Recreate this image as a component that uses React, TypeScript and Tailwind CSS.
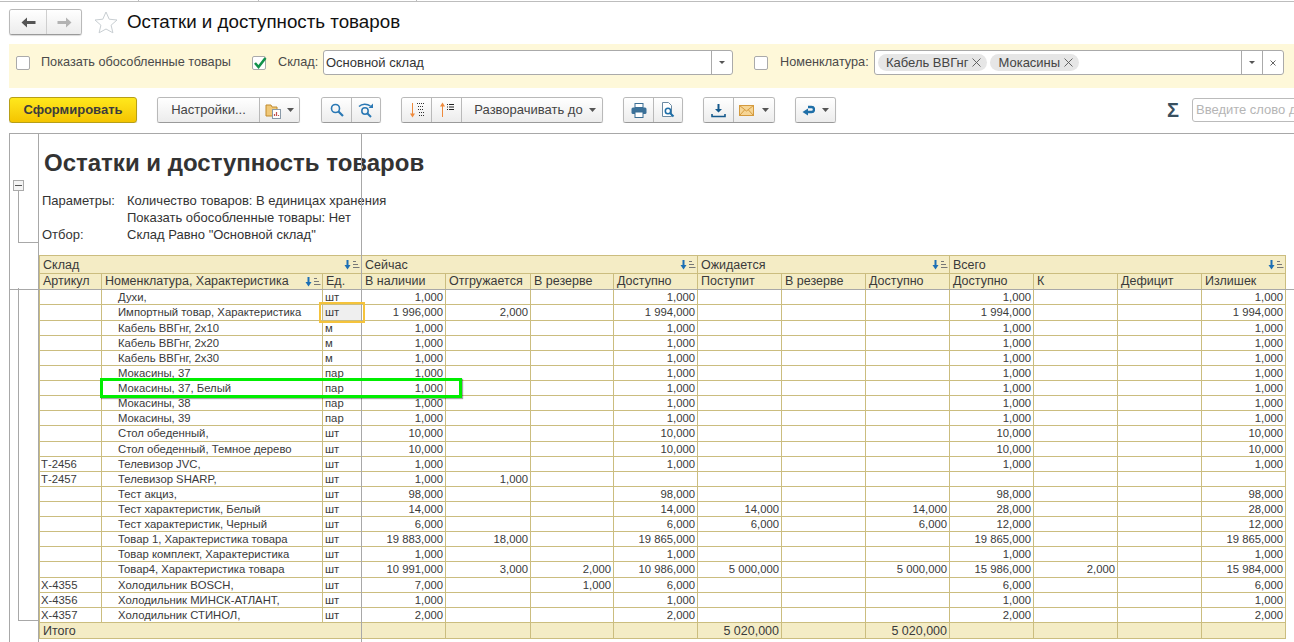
import React from 'react';

type Row = {
  art?: string;
  name: string;
  unit: string;
  vals: string[];
  tall?: boolean;
  selected?: boolean;
};

// колонки: В наличии, Отгружается, В резерве, Доступно, Поступит, В резерве, Доступно, Доступно, К, Дефицит, Излишек
const simple = (v: string) => [v, '', '', v, '', '', '', v, '', '', v];

const rows: Row[] = [
  { name: 'Духи,', unit: 'шт', vals: simple('1,000') },
  { name: 'Импортный товар, Характеристика', unit: 'шт', tall: true, selected: true, vals: ['1 996,000', '2,000', '', '1 994,000', '', '', '', '1 994,000', '', '', '1 994,000'] },
  { name: 'Кабель ВВГнг, 2х10', unit: 'м', vals: simple('1,000') },
  { name: 'Кабель ВВГнг, 2х20', unit: 'м', vals: simple('1,000') },
  { name: 'Кабель ВВГнг, 2х30', unit: 'м', vals: simple('1,000') },
  { name: 'Мокасины, 37', unit: 'пар', vals: simple('1,000') },
  { name: 'Мокасины, 37, Белый', unit: 'пар', vals: simple('1,000') },
  { name: 'Мокасины, 38', unit: 'пар', vals: simple('1,000') },
  { name: 'Мокасины, 39', unit: 'пар', vals: simple('1,000') },
  { name: 'Стол обеденный,', unit: 'шт', tall: true, vals: simple('10,000') },
  { name: 'Стол обеденный, Темное дерево', unit: 'шт', vals: simple('10,000') },
  { art: 'Т-2456', name: 'Телевизор JVC,', unit: 'шт', vals: simple('1,000') },
  { art: 'Т-2457', name: 'Телевизор SHARP,', unit: 'шт', vals: ['1,000', '1,000', '', '', '', '', '', '', '', '', ''] },
  { name: 'Тест акциз,', unit: 'шт', vals: simple('98,000') },
  { name: 'Тест характеристик, Белый', unit: 'шт', vals: ['14,000', '', '', '14,000', '14,000', '', '14,000', '28,000', '', '', '28,000'] },
  { name: 'Тест характеристик, Черный', unit: 'шт', vals: ['6,000', '', '', '6,000', '6,000', '', '6,000', '12,000', '', '', '12,000'] },
  { name: 'Товар 1, Характеристика товара', unit: 'шт', vals: ['19 883,000', '18,000', '', '19 865,000', '', '', '', '19 865,000', '', '', '19 865,000'] },
  { name: 'Товар комплект, Характеристика', unit: 'шт', vals: simple('1,000') },
  { name: 'Товар4, Характеристика товара', unit: 'шт', tall: true, vals: ['10 991,000', '3,000', '2,000', '10 986,000', '5 000,000', '', '5 000,000', '15 986,000', '2,000', '', '15 984,000'] },
  { art: 'Х-4355', name: 'Холодильник BOSCH,', unit: 'шт', vals: ['7,000', '', '1,000', '6,000', '', '', '', '6,000', '', '', '6,000'] },
  { art: 'Х-4356', name: 'Холодильник МИНСК-АТЛАНТ,', unit: 'шт', vals: simple('1,000') },
  { art: 'Х-4357', name: 'Холодильник СТИНОЛ,', unit: 'шт', vals: simple('2,000') },
];

const columnWidths = ['w-[62px]', 'w-[221px]', 'w-[39px]', 'w-[84px]', 'w-[85px]', 'w-[83px]', 'w-[84px]', 'w-[84px]', 'w-[84px]', 'w-[84px]', 'w-[84px]', 'w-[84px]', 'w-[84px]', 'w-[84px]'];

const btnClass = 'flex items-center justify-center h-full bg-gradient-to-b from-white to-[#ececec]';
const groupClass = 'flex shrink-0 h-[26px] rounded-[3px] border border-[#b9b9b9] border-b-[#9a9a9a] shadow-[0_1px_1px_rgba(0,0,0,0.15)] overflow-hidden text-[#444]';

const Caret = () => (
  <svg width="7" height="4" viewBox="0 0 7 4" className="shrink-0"><path d="M0 0h7L3.5 4z" fill="#555" /></svg>
);

const SmallCaret = () => (
  <svg width="6" height="3" viewBox="0 0 6 3" className="shrink-0"><path d="M0 0h6L3 3z" fill="#555" /></svg>
);

const Checkbox = ({ checked }: { checked?: boolean }) => (
  <span className="relative block w-[14px] h-[14px] shrink-0 rounded-[2px] border border-[#aaa] bg-white">
    {checked && (
      <svg width="15" height="14" viewBox="0 0 15 14" className="absolute left-0 -top-[1px]">
        <path d="M2 7l3.5 4L12.5 2" fill="none" stroke="#12924a" strokeWidth="2.6" />
      </svg>
    )}
  </span>
);

const SortIcon = () => (
  <svg width="16" height="10" viewBox="0 0 16 10" className="shrink-0 -mr-[2px]">
    <path d="M3.5 0v6" stroke="#1c6fb5" strokeWidth="2" />
    <path d="M0.5 5h6L3.5 9.5z" fill="#1c6fb5" />
    <path d="M9 1.5h3M9 4.5h5M9 7.5h6.5" stroke="#777" strokeWidth="1" />
  </svg>
);

const Chip = ({ label }: { label: string }) => (
  <span className="flex items-center h-[17px] rounded-full bg-[#e6e6e6] pl-[8px] pr-[6px] gap-[4px] text-[#444] text-[13px]">
    {label}
    <svg width="9" height="9" viewBox="0 0 9 9"><path d="M0.5 0.5l8 8M8.5 0.5l-8 8" stroke="#555" strokeWidth="0.9" /></svg>
  </span>
);

function FilterBar() {
  return (
    <div className="flex items-center h-[44px] pb-[7px] ml-[9px] mt-[2px] bg-[#fef8d9] text-[12.7px] text-[#4a4a4a]">
      <span className="ml-[7px]"><Checkbox /></span>
      <span className="ml-[11px] w-[211px]">Показать обособленные товары</span>
      <Checkbox checked />
      <span className="ml-[12px] w-[45px]">Склад:</span>
      <div className="flex items-center h-[25px] w-[410px] rounded-[3px] border border-[#aaa] bg-white text-[#333] text-[13px]">
        <span className="flex-1 pl-[2px]">Основной склад</span>
        <span className="flex items-center justify-center w-[21px] h-full border-l border-[#aaa]"><SmallCaret /></span>
      </div>
      <span className="ml-[21px]"><Checkbox /></span>
      <span className="ml-[12px] w-[94px]">Номенклатура:</span>
      <div className="flex items-center h-[25px] w-[410px] rounded-[3px] border border-[#aaa] bg-white">
        <div className="flex flex-1 items-center gap-[3px] pl-[3px]">
          <Chip label="Кабель ВВГнг" />
          <Chip label="Мокасины" />
        </div>
        <span className="flex items-center justify-center w-[21px] h-full border-l border-[#aaa]"><SmallCaret /></span>
        <span className="flex items-center justify-center w-[21px] h-full border-l border-[#aaa]">
          <svg width="6" height="6" viewBox="0 0 6 6"><path d="M0.5 0.5l5 5M5.5 0.5l-5 5" stroke="#666" strokeWidth="1" /></svg>
        </span>
      </div>
    </div>
  );
}

function Toolbar() {
  return (
    <div className="flex items-center h-[26px] mt-[9px] ml-[9px] text-[13px] overflow-hidden">
      <button className="shrink-0 w-[128px] h-[26px] rounded-[3px] border border-[#b79f17] bg-gradient-to-b from-[#ffe81c] to-[#f4c400] font-bold text-[#3c3c3c] shadow-[0_1px_1px_rgba(0,0,0,0.2)]">
        Сформировать
      </button>

      <div className={`${groupClass} ml-[20px] w-[143px]`}>
        <span className={`${btnClass} w-[102px] border-r border-[#b9b9b9]`}>Настройки...</span>
        <span className={`${btnClass} flex-1 gap-[5px]`}>
          <svg width="17" height="17" viewBox="0 0 17 17">
            <path d="M1 3h5l1 2h5v9H1z" fill="#f0c878" stroke="#c08a2c" />
            <rect x="7.5" y="7.5" width="8" height="9" fill="#fff" stroke="#8a9aa8" />
            <path d="M9.5 14v-2M11.5 14v-4M13.5 14v-1" stroke="#c0504d" strokeWidth="1.2" />
          </svg>
          <Caret />
        </span>
      </div>

      <div className={`${groupClass} ml-[21px] w-[60px]`}>
        <span className={`${btnClass} w-[30px] border-r border-[#b9b9b9]`}>
          <svg width="14" height="14" viewBox="0 0 14 14" fill="none" stroke="#2a78b4">
            <circle cx="5.5" cy="5.5" r="4" strokeWidth="1.6" />
            <path d="M8.5 8.5L13 13" strokeWidth="2.2" />
          </svg>
        </span>
        <span className={`${btnClass} flex-1`}>
          <svg width="16" height="15" viewBox="0 0 16 15" fill="none" stroke="#2a78b4">
            <path d="M1 3.5C4 0.5 9 0.5 12.5 3" strokeWidth="1.5" />
            <path d="M15 0.5v4.5h-4.5z" fill="#2a78b4" stroke="none" />
            <circle cx="7" cy="8" r="3.2" strokeWidth="1.5" />
            <path d="M9.5 10.5L13 14" strokeWidth="2" />
          </svg>
        </span>
      </div>

      <div className={`${groupClass} ml-[20px] w-[202px]`}>
        <span className={`${btnClass} w-[30px] border-r border-[#b9b9b9]`}>
          <svg width="16" height="16" viewBox="0 0 16 16">
            <path d="M3.5 1v12" stroke="#ee8a3c" strokeWidth="1" />
            <path d="M1 11.5h5L3.5 15.5z" fill="#ee8a3c" />
            <path d="M8 1.5h7M9 4.5h6M9 7.5h6M10 10.5h5M10 13.5h5" stroke="#333" strokeWidth="1" strokeDasharray="1 1" />
          </svg>
        </span>
        <span className={`${btnClass} w-[30px] border-r border-[#b9b9b9]`}>
          <svg width="16" height="16" viewBox="0 0 16 16">
            <path d="M3.5 4v11" stroke="#ee8a3c" strokeWidth="1" />
            <path d="M1 4.5h5L3.5 0.5z" fill="#ee8a3c" />
            <path d="M8 2.5h1M8 5h1M8 7.5h1M10 2.5h5M10 5h5M10 7.5h5" stroke="#222" strokeWidth="1.2" />
          </svg>
        </span>
        <span className={`${btnClass} flex-1 gap-[6px] pl-[6px]`}>Разворачивать до <Caret /></span>
      </div>

      <div className={`${groupClass} ml-[20px] w-[60px]`}>
        <span className={`${btnClass} w-[30px] border-r border-[#b9b9b9]`}>
          <svg width="16" height="15" viewBox="0 0 16 15">
            <rect x="4" y="0.5" width="8" height="4" fill="#fff" stroke="#3b6e94" />
            <rect x="0.5" y="4.5" width="15" height="6.5" rx="1.5" fill="#3b7199" />
            <rect x="4" y="9" width="8" height="5.5" fill="#fff" stroke="#3b6e94" />
          </svg>
        </span>
        <span className={`${btnClass} flex-1`}>
          <svg width="15" height="16" viewBox="0 0 15 16" fill="none">
            <path d="M1.5 0.5h6l3 3v11h-9z" fill="#fff" stroke="#6c8aa2" />
            <circle cx="7" cy="9" r="2.7" stroke="#1f6fa8" strokeWidth="1.6" />
            <path d="M9 11l3.5 3.5" stroke="#1f6fa8" strokeWidth="2" />
          </svg>
        </span>
      </div>

      <div className={`${groupClass} ml-[20px] w-[72px]`}>
        <span className={`${btnClass} w-[30px] border-r border-[#b9b9b9]`}>
          <svg width="15" height="15" viewBox="0 0 15 15">
            <path d="M6.5 1h2v5H11L7.5 9.5 4 6h2.5z" fill="#14598c" />
            <path d="M1 11v2.5h13V11" fill="none" stroke="#14598c" strokeWidth="1.6" />
          </svg>
        </span>
        <span className={`${btnClass} flex-1 gap-[8px]`}>
          <svg width="15" height="11" viewBox="0 0 15 11">
            <rect x="0.5" y="0.5" width="14" height="10" fill="#f6d595" stroke="#d49a3e" />
            <path d="M0.5 0.5L7.5 6l7-5.5M0.5 10.5L5.5 5M14.5 10.5L9.5 5" fill="none" stroke="#d49a3e" />
          </svg>
          <Caret />
        </span>
      </div>

      <div className={`${groupClass} ml-[20px] w-[41px]`}>
        <span className={`${btnClass} w-full gap-[7px]`}>
          <svg width="13" height="12" viewBox="0 0 13 12" fill="none">
            <path d="M6 3h3.5a2.2 2.2 0 0 1 0 5H5" stroke="#1f6fa8" strokeWidth="2.4" />
            <path d="M6 4.5L0.5 8 6 11.5z" fill="#1f6fa8" />
          </svg>
          <Caret />
        </span>
      </div>

      <span className="shrink-0 ml-[331px] w-[25px] text-[20px] font-bold leading-none text-[#39505f]">Σ</span>
      <div className="flex items-center shrink-0 w-[120px] h-[24px] pl-[3px] rounded-[3px] border border-[#bbb] bg-white text-[#b5b5b5] whitespace-nowrap overflow-hidden">
        Введите слово д
      </div>
    </div>
  );
}

function ReportTable() {
  const td = 'p-0 pt-[1px] px-[2px] border border-[#cbbd7f] truncate';
  const th = 'p-0 px-[3px] border border-[#cbbd7f] font-normal text-left bg-[#f4ecc5] text-[12.5px] truncate';
  return (
    <table className="table-fixed border-collapse w-[1246px] text-[11.3px] leading-none text-[#3a3a3a]">
      <colgroup>
        {columnWidths.map((w, i) => <col key={i} className={w} />)}
      </colgroup>
      <thead>
        <tr className="h-[18px]">
          {[['Склад', 3], ['Сейчас', 4], ['Ожидается', 3], ['Всего', 4]].map(([label, span]) => (
            <th key={label} colSpan={span as number} className={`${th} pt-[1px]`}>
              <div className="flex items-center justify-between">
                <span>{label}</span>
                <SortIcon />
              </div>
            </th>
          ))}
        </tr>
        <tr className="h-[16px]">
          <th className={th}>Артикул</th>
          <th className={th}>
            <div className="flex items-center justify-between">
              <span>Номенклатура, Характеристика</span>
              <SortIcon />
            </div>
          </th>
          {['Ед.', 'В наличии', 'Отгружается', 'В резерве', 'Доступно', 'Поступит', 'В резерве', 'Доступно', 'Доступно', 'К', 'Дефицит', 'Излишек'].map((h, i) => (
            <th key={i} className={th}>{h}</th>
          ))}
        </tr>
      </thead>
      <tbody>
        {rows.map((r) => (
          <tr key={r.name} className={r.tall ? 'h-[16px]' : 'h-[15px]'}>
            <td className={`${td} pl-[1px]`}>{r.art}</td>
            <td className={`${td} pl-[16px]`}>{r.name}</td>
            <td className={r.selected ? `${td} bg-[#efefef]` : td}>{r.unit}</td>
            {r.vals.map((v, i) => (
              <td key={i} className={`${td} text-right`}>{v}</td>
            ))}
          </tr>
        ))}
        <tr className="h-[16px] bg-[#f4ecc5] text-[12.5px]">
          <td colSpan={3} className={`${td} px-[3px]`}>Итого</td>
          {['', '', '', '', '5 020,000', '', '5 020,000', '', '', '', ''].map((v, i) => (
            <td key={i} className={`${td} text-right`}>{v}</td>
          ))}
        </tr>
      </tbody>
    </table>
  );
}

export default function App() {
  return (
    <div className="h-[642px] w-[1294px] overflow-hidden bg-white font-['Liberation_Sans',Arial,sans-serif]">
      <div className="flex h-[2px] border-b border-[#bdbdbd]">
        <span className="w-[139px] border-r border-[#bdbdbd]" />
        <span className="w-[120px] border-r border-[#bdbdbd]" />
        <span className="w-[158px] border-r border-[#bdbdbd]" />
      </div>

      <div className="flex items-center h-[40px] ml-[9px]">
        <div className={`${groupClass} w-[73px] h-[25px]`}>
          <span className={`${btnClass} w-[37px] border-r border-[#cfcfcf]`}>
            <svg width="15" height="11" viewBox="0 0 15 11"><path d="M6 0.5v3.5h8.5v3H6v3.5L0.5 5.5z" fill="#555" /></svg>
          </span>
          <span className={`${btnClass} flex-1`}>
            <svg width="15" height="11" viewBox="0 0 15 11"><path d="M9 0.5v3.5H0.5v3H9v3.5l5.5-5z" fill="#b3b3b3" /></svg>
          </span>
        </div>
        <svg width="24" height="23" viewBox="0 0 24 23" className="ml-[12px]">
          <path d="M12 1l3.2 7.2 7.8.8-5.9 5.2 1.8 7.6L12 18l-6.9 3.8 1.8-7.6L1 9l7.8-.8z" fill="#fff" stroke="#c8ced2" />
        </svg>
        <h1 className="ml-[9px] mt-[1px] text-[18.75px] leading-none text-[#111]">Остатки и доступность товаров</h1>
      </div>

      <FilterBar />
      <Toolbar />

      <div className="relative flex mt-[10px] ml-[9px] h-[509px] border-t border-[#a8a8a8]">
        {/* группировки слева */}
        <div className="flex flex-col w-[30px] shrink-0 border-l border-r border-[#a8a8a8]">
          <div className="h-[46px]" />
          <span className="flex items-center justify-center w-[11px] h-[11px] ml-[3px] border border-[#aaa] bg-[#f4f4f4]">
            <span className="w-[7px] h-px bg-[#555]" />
          </span>
          <div className="h-[52px] ml-[8px] border-l border-b border-[#a8a8a8]" />
          <div className="h-[45px]" />
          <div className="h-[333px] ml-[8px] border-l border-b border-t-0 border-[#a8a8a8]" />
        </div>

        <div className="flex-1">
          <div className="h-[121px] pl-[3px] text-[13px] text-[#333]">
            <h2 className="pt-[15px] pl-[2px] text-[24px] leading-[28px] font-bold text-[#333]">Остатки и доступность товаров</h2>
            <div className="grid grid-cols-[85px_1fr] mt-[15px] leading-[17px]">
              <span>Параметры:</span>
              <span>Количество товаров: В единицах хранения</span>
              <span />
              <span>Показать обособленные товары: Нет</span>
              <span>Отбор:</span>
              <span>Склад Равно "Основной склад"</span>
            </div>
          </div>
          <ReportTable />
        </div>

        {/* линия фиксации шапки */}
        <div className="absolute left-0 right-0 top-[155px] h-px bg-[#a8a8a8]" />
        <div className="absolute left-[352px] top-0 bottom-0 w-px bg-[#a8a8a8]" />

        {/* текущая ячейка и зелёная рамка поверх таблицы */}
        <div className="absolute left-[310px] top-[168px] w-[46px] h-[21px] border-2 border-[#f5c33b]" />
        <div className="absolute left-[91px] top-[244px] w-[362px] h-[20px] border-[3px] border-[#00ee00] shadow-[1px_1px_1px_rgba(0,0,0,0.35)]" />
      </div>
    </div>
  );
}
